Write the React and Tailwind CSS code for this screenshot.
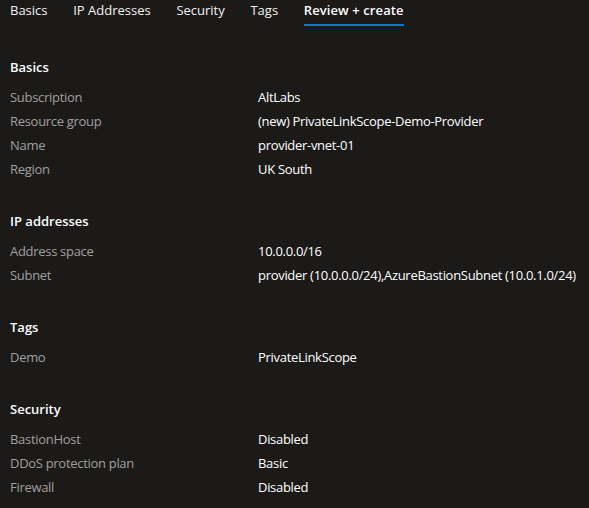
import React from "react";

const sections = [
  {
    title: "Basics",
    rows: [
      ["Subscription", "AltLabs"],
      ["Resource group", "(new) PrivateLinkScope-Demo-Provider"],
      ["Name", "provider-vnet-01"],
      ["Region", "UK South"],
    ],
  },
  {
    title: "IP addresses",
    rows: [
      ["Address space", "10.0.0.0/16"],
      ["Subnet", "provider (10.0.0.0/24),AzureBastionSubnet (10.0.1.0/24)"],
    ],
  },
  {
    title: "Tags",
    rows: [["Demo", "PrivateLinkScope"]],
  },
  {
    title: "Security",
    rows: [
      ["BastionHost", "Disabled"],
      ["DDoS protection plan", "Basic"],
      ["Firewall", "Disabled"],
    ],
  },
];

const tabs = ["Basics", "IP Addresses", "Security", "Tags", "Review + create"];

export default function App() {
  return (
    <div
      className="w-[589px] h-[508px] overflow-hidden bg-[#1b1a19] text-[13px] text-white"
      style={{ fontFamily: '"Open Sans", "Noto Sans", sans-serif' }}
    >
      <div className="flex gap-[25.7px] pl-[10px]">
        {tabs.map((t, i) => (
          <div
            key={t}
            className={
              i === 4
                ? "leading-5 pb-1 border-b-2 border-[#0f78d4] font-semibold text-white tracking-[0.1px]"
                : "leading-5 pb-1 border-b-2 border-transparent text-[#f3f2f1]"
            }
          >
            {t}
          </div>
        ))}
      </div>
      <div className="pl-[10px] pt-[31px] flex flex-col gap-[29px]">
        {sections.map((s) => (
          <div key={s.title} className="flex flex-col">
            <div className="leading-5 font-semibold text-white mb-[9px]">{s.title}</div>
            {s.rows.map(([k, v]) => (
              <div key={k} className="flex h-6 items-center tracking-[-0.3px] whitespace-nowrap">
                <div className="w-[248px] shrink-0 text-[#a19f9d]">{k}</div>
                <div className="text-white">{v}</div>
              </div>
            ))}
          </div>
        ))}
      </div>
    </div>
  );
}
